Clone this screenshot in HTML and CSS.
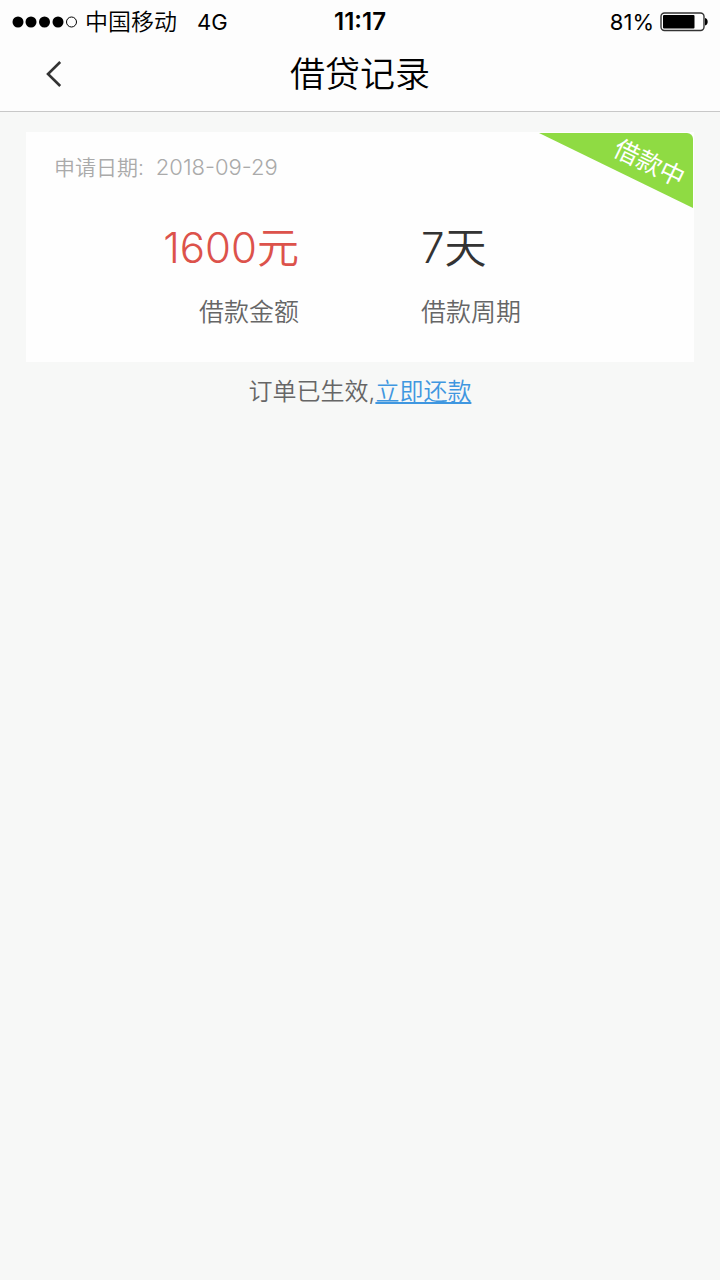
FILE: index.html
```html
<!DOCTYPE html>
<html lang="zh-CN">

<head>
    <meta charset="UTF-8">
    <meta name="viewport" content="width=device-width, initial-scale=1.0">
    <title>借贷记录</title>

    <link rel="stylesheet" href="styles.css">
</head>

<body>

    <header class="top">
        <div class="status-bar">
            <div class="carrier">
                <svg class="signal" viewBox="0 0 66 12" width="66" height="12">
                    <circle cx="6" cy="6" r="5.5"></circle>
                    <circle cx="19" cy="6" r="5.5"></circle>
                    <circle cx="32.500" cy="6" r="5.5"></circle>
                    <circle cx="46" cy="6" r="5.5"></circle>
                    <circle cx="59.500" cy="6" r="5" fill="none" stroke="#000"></circle>
                </svg>
                <span class="operator">中国移动</span>
                <span>4G</span>
            </div>
            <time class="clock">11:17</time>
            <div class="battery">
                <span>81%</span>
                <svg viewBox="0 0 48 20" width="48" height="20">
                    <rect x="1" y="1" width="43" height="17.5" rx="3.5" fill="none" stroke="#333" stroke-width="1.4"></rect>
                    <rect x="3" y="3" width="31.5" height="13.5" rx="1"></rect>
                    <path d="M45 6c3.600 .6 3.600 7 0 7.600z"></path>
                </svg>
            </div>
        </div>

        <nav class="nav-bar">
            <button type="button" class="back" aria-label="返回">
                <svg viewBox="0 0 16 26" width="16" height="26">
                    <path d="M14.200 1L2 13l12.200 12" fill="none" stroke="#333" stroke-width="2.600"></path>
                </svg>
            </button>
            <h1>借贷记录</h1>
        </nav>
    </header>

    <main>
        <section class="card">
            <div class="ribbon"><span>借款中</span></div>
            <p class="date">申请日期: <time>2018-09-29</time></p>
            <dl class="loan">
                <div class="amount">
                    <dt>借款金额</dt>
                    <dd>1600元</dd>
                </div>
                <div class="period">
                    <dt>借款周期</dt>
                    <dd>7天</dd>
                </div>
            </dl>
        </section>
        <p class="tip">订单已生效,<a href="#">立即还款</a></p>
    </main>

</body>

</html>
```

FILE: styles.css
```css
*,
*::before,
*::after {
    box-sizing: border-box;
}

body {
    margin: 0;
    min-height: 100vh;
    background-color: #f7f8f7;
    color: #666;
    font-family: Inter, "Noto Sans CJK SC", sans-serif;
    font-size: 24px;
    font-weight: 350;
}

.top {
    background-color: #fdfdfd;
    border-bottom: 1px solid #c8c8c8;
    color: #000;
}

.status-bar {
    display: grid;
    grid-template-columns: 1fr auto 1fr;
    align-items: center;
    height: 43px;
    padding: 0 12px;
    font-size: 22px;
    font-weight: 400;
}

.carrier,
.battery {
    display: flex;
    align-items: center;
}

.signal {
    margin-right: 7px;
}

.operator {
    margin-right: 20px;
    font-size: 23px;
    font-weight: 350;
    line-height: 32px;
}

.clock {
    font-size: 24px;
    font-weight: 600;
}

.battery {
    justify-content: flex-end;
    gap: 6px;
}

.nav-bar {
    display: grid;
    grid-template-columns: 64px 1fr 64px;
    align-items: center;
    height: 68px;
    padding: 0 12px 6px;
}

.back {
    display: flex;
    justify-content: flex-end;
    padding: 12px 14px;
    border: 0;
    background: none;
    cursor: pointer;
}

.nav-bar h1 {
    margin: 0;
    font-size: 35px;
    font-weight: 350;
    line-height: 48px;
    text-align: center;
}

main {
    padding: 20px 26px;
}

.card {
    position: relative;
    padding: 20px 28px 32px;
    background-color: #fefefe;
}

.ribbon {
    position: absolute;
    top: 1px;
    right: 1px;
    width: 154px;
    height: 75px;
    border-radius: 0 6px 0 0;
    background-color: #8fdb43;
    clip-path: polygon(0 0, 100% 0, 100% 100%);
    color: #fff;
}

.ribbon span {
    position: absolute;
    top: 14px;
    right: 6px;
    font-size: 25px;
    font-weight: 400;
    line-height: 32px;
    transform: rotate(26deg);
}

.date {
    margin: 0;
    color: #aaa;
    font-size: 21px;
    line-height: 32px;
}

.date time {
    margin-left: 6px;
    font-size: 22px;
    line-height: 1;
}

.loan {
    display: grid;
    grid-template-columns: 1fr 1fr;
    column-gap: 122px;
    margin: 32px 0 0;
}

.loan div {
    display: flex;
    flex-direction: column-reverse;
    gap: 14px;
}

.loan dt {
    font-size: 25px;
    line-height: 36px;
}

.loan dd {
    margin: 0;
    font-size: 42px;
    line-height: 64px;
}

.amount {
    text-align: right;
}

.amount dd {
    color: #dc524b;
}

.period dd {
    color: #333;
}

.tip {
    margin: 12px 0 0;
    line-height: 36px;
    text-align: center;
}

.tip a {
    color: #3f97e0;
    text-decoration-thickness: 2px;
    text-underline-offset: 2px;
}
```
